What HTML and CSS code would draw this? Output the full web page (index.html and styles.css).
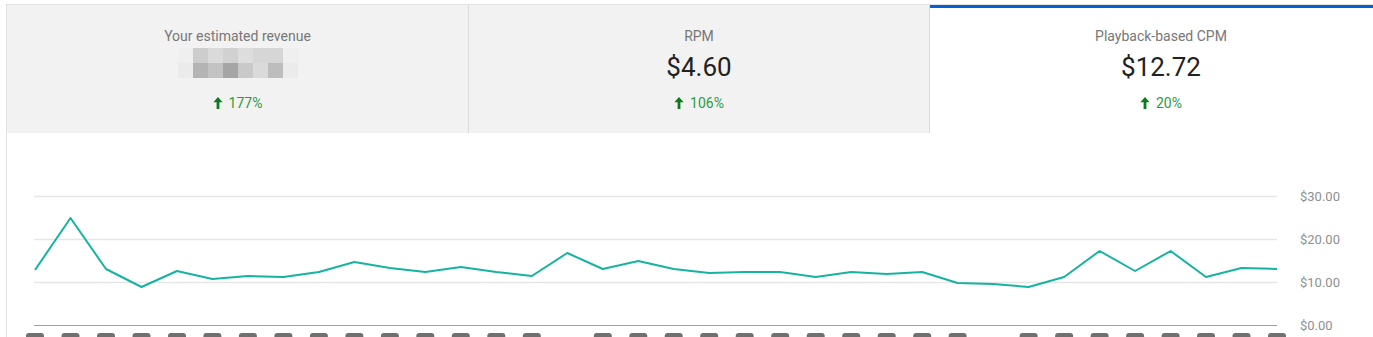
FILE: index.html
```html
<!DOCTYPE html>
<html lang="en">
<head>
    <meta charset="UTF-8">
    <title>Revenue - Analytics</title>
    <link rel="stylesheet" href="styles.css">
</head>
<body>
    <div class="card">
        <div class="tabs">
            <div class="tab">
                <div class="label">Your estimated revenue</div>
                <div class="value">
                    <!-- value hidden behind a mosaic -->
                    <div class="mosaic">
                        <span class="g1"></span><span class="g5"></span><span class="g4"></span><span class="g5b"></span>
                        <span class="g3"></span><span class="g4b"></span><span class="g4b"></span><span class="g1"></span>
                        <span class="g2"></span><span class="g7"></span><span class="g6"></span><span class="g8"></span>
                        <span class="g5c"></span><span class="g4"></span><span class="g6b"></span><span class="g2"></span>
                    </div>
                </div>
                <div class="delta">
                    <svg class="arrow" viewBox="0 0 10 12"><path d="M5 0L0.4 5.2H3.6V12H6.4V5.2H9.6Z"/></svg>
                    <span>177%</span>
                </div>
            </div>
            <div class="tab">
                <div class="label">RPM</div>
                <div class="value">$4.60</div>
                <div class="delta">
                    <svg class="arrow" viewBox="0 0 10 12"><path d="M5 0L0.4 5.2H3.6V12H6.4V5.2H9.6Z"/></svg>
                    <span>106%</span>
                </div>
            </div>
            <div class="tab active">
                <div class="label">Playback-based CPM</div>
                <div class="value">$12.72</div>
                <div class="delta">
                    <svg class="arrow" viewBox="0 0 10 12"><path d="M5 0L0.4 5.2H3.6V12H6.4V5.2H9.6Z"/></svg>
                    <span>20%</span>
                </div>
            </div>
        </div>

        <div class="chart">
            <svg class="chart-svg" width="1366" height="204" viewBox="7 133 1366 204">
                <g class="grid">
                    <line x1="34" y1="196.5" x2="1277" y2="196.5"/>
                    <line x1="34" y1="239.5" x2="1277" y2="239.5"/>
                    <line x1="34" y1="282.5" x2="1277" y2="282.5"/>
                </g>
                <line class="baseline" x1="34" y1="325.5" x2="1277" y2="325.5"/>

                <g class="axis-labels">
                    <text x="1300" y="196.5">$30.00</text>
                    <text x="1300" y="239.5">$20.00</text>
                    <text x="1300" y="282.5">$10.00</text>
                    <text x="1300" y="325.5">$0.00</text>
                </g>

                <polyline class="series" points="35,270 70.5,218 106,269 141.5,287 177,271 212.4,279 247.9,276 283.4,277 318.9,272 354.4,262 389.9,268 425.3,272 460.8,267 496.3,272 531.8,276 567.3,253 602.8,269 638.3,261 673.7,269 709.2,273 744.7,272 780.2,272 815.7,277 851.2,272 886.7,274 922.2,272 957.6,283 993.1,284 1028.6,287 1064.1,277 1099.6,251 1135.1,271 1170.6,251 1206,277 1241.5,268 1277,269"/>

                <!-- date labels are blurred out, only the blocks remain -->
                <g class="ticks">
                    <rect x="26" y="333" width="18" height="10" rx="3"/>
                    <rect x="61.5" y="333" width="18" height="10" rx="3"/>
                    <rect x="97" y="333" width="18" height="10" rx="3"/>
                    <rect x="132.5" y="333" width="18" height="10" rx="3"/>
                    <rect x="168" y="333" width="18" height="10" rx="3"/>
                    <rect x="203.4" y="333" width="18" height="10" rx="3"/>
                    <rect x="238.9" y="333" width="18" height="10" rx="3"/>
                    <rect x="274.4" y="333" width="18" height="10" rx="3"/>
                    <rect x="309.9" y="333" width="18" height="10" rx="3"/>
                    <rect x="345.4" y="333" width="18" height="10" rx="3"/>
                    <rect x="380.9" y="333" width="18" height="10" rx="3"/>
                    <rect x="416.3" y="333" width="18" height="10" rx="3"/>
                    <rect x="451.8" y="333" width="18" height="10" rx="3"/>
                    <rect x="487.3" y="333" width="18" height="10" rx="3"/>
                    <rect x="522.8" y="333" width="18" height="10" rx="3"/>
                    <rect x="593.8" y="333" width="18" height="10" rx="3"/>
                    <rect x="629.3" y="333" width="18" height="10" rx="3"/>
                    <rect x="664.7" y="333" width="18" height="10" rx="3"/>
                    <rect x="700.2" y="333" width="18" height="10" rx="3"/>
                    <rect x="735.7" y="333" width="18" height="10" rx="3"/>
                    <rect x="771.2" y="333" width="18" height="10" rx="3"/>
                    <rect x="806.7" y="333" width="18" height="10" rx="3"/>
                    <rect x="842.2" y="333" width="18" height="10" rx="3"/>
                    <rect x="877.7" y="333" width="18" height="10" rx="3"/>
                    <rect x="913.2" y="333" width="18" height="10" rx="3"/>
                    <rect x="948.6" y="333" width="18" height="10" rx="3"/>
                    <rect x="1019.6" y="333" width="18" height="10" rx="3"/>
                    <rect x="1055.1" y="333" width="18" height="10" rx="3"/>
                    <rect x="1090.6" y="333" width="18" height="10" rx="3"/>
                    <rect x="1126.1" y="333" width="18" height="10" rx="3"/>
                    <rect x="1161.6" y="333" width="18" height="10" rx="3"/>
                    <rect x="1197" y="333" width="18" height="10" rx="3"/>
                    <rect x="1232.5" y="333" width="18" height="10" rx="3"/>
                    <rect x="1268" y="333" width="18" height="10" rx="3"/>
                </g>
            </svg>
        </div>
    </div>
</body>
</html>
```

FILE: styles.css
```css
html, body {
    margin: 0;
    overflow: hidden;
    background: white;
}
body {
    padding: 4px 0 0 6px;
    font-family: Roboto, 'Noto Sans', Arial, sans-serif;
}
/* the card is wider than the window, the last tab runs off the edge */
.card {
    width: 1385px;
    border-top: 1px solid #e2e2e2;
    border-left: 1px solid #e2e2e2;
    background: white;
}
.tabs {
    display: grid;
    grid-template-columns: 462px 461px 462px;
    height: 128px;
}
.tab {
    background: #f2f2f2;
    border-right: 1px solid #dcdcdc;
    text-align: center;
    padding-top: 21px;
}
.tab.active {
    background: white;
    border-right: none;
    box-shadow: inset 0 3px 0 #065fd4;
}
.label {
    font-size: 14px;
    line-height: 20px;
    color: #777777;
}
.value {
    margin-top: 5px;
    height: 32px;
    font-size: 26px;
    line-height: 32px;
    color: #222222;
}
.mosaic {
    display: grid;
    grid-template-columns: repeat(8, 15px);
    grid-auto-rows: 15px;
    width: 120px;
    margin: 0 auto;
    position: relative;
    top: -3px;
}
.g1 { background: #efefef; }
.g2 { background: #ebebeb; }
.g3 { background: #dddddd; }
.g4 { background: #dadada; }
.g4b { background: #d6d6d6; }
.g5 { background: #cdcdcd; }
.g5b { background: #d1d1d1; }
.g5c { background: #c9c9c9; }
.g6 { background: #c3c3c3; }
.g6b { background: #bdbdbd; }
.g7 { background: #b4b4b4; }
.g8 { background: #a5a5a5; }

.delta {
    margin-top: 10px;
    display: flex;
    justify-content: center;
    align-items: center;
    gap: 6px;
    font-size: 14px;
    line-height: 20px;
    color: #2e9b3e;
}
.arrow {
    width: 10px;
    height: 12px;
    fill: #0d7a1d;
}

.chart {
    height: 204px;
}
.chart-svg {
    display: block;
}
.grid line {
    stroke: #e6e6e6;
    stroke-width: 1.5;
}
.baseline {
    stroke: #a0a0a0;
    stroke-width: 1;
}
.axis-labels text {
    font-family: Roboto, Arial, sans-serif;
    font-size: 13px;
    fill: #8f8f8f;
    dominant-baseline: central;
}
.series {
    fill: none;
    stroke: #16b3a0;
    stroke-width: 2;
    stroke-linejoin: round;
}
.ticks rect {
    fill: #707070;
}
```
